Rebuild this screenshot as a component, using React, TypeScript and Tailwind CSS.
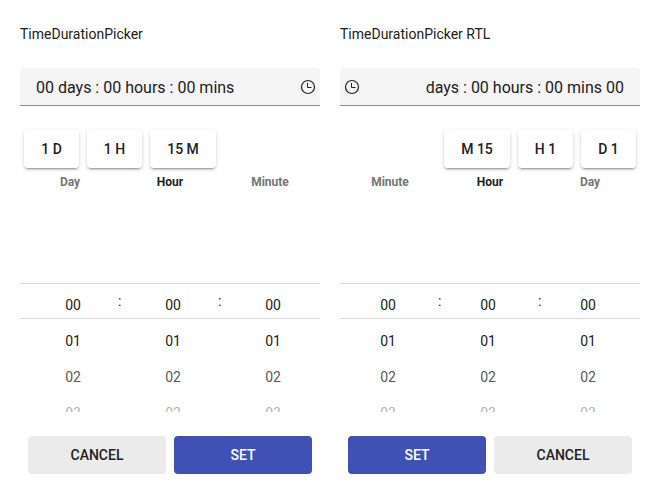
import React from 'react';

const FONT = "font-['Roboto','Liberation_Sans',sans-serif]";

function Clock() {
  return (
    <svg width="16" height="16" viewBox="0 0 16 16" fill="none" stroke="#212121" className="shrink-0">
      <circle cx="8" cy="8" r="6.5" strokeWidth="1.2" />
      <path d="M7.5 4V8.5H11.5" strokeWidth="1" />
    </svg>
  );
}

function Preset({ label, width }: { label: string; width: string }) {
  return (
    <button className={`h-[38px] rounded-[4px] bg-white text-sm font-medium shadow-[0_3px_1px_-2px_rgba(0,0,0,0.2),0_2px_2px_0_rgba(0,0,0,0.14),0_1px_5px_0_rgba(0,0,0,0.12)] ${width}`}>
      {label}
    </button>
  );
}

function Column({ rtl }: { rtl: boolean }) {
  return (
    <div className={`flex flex-1 flex-col text-center text-sm leading-9 ${rtl ? 'pr-1' : 'pl-1.5'}`}>
      <span>00</span>
      <span>01</span>
      <span className="opacity-75">02</span>
      <span className="opacity-35">03</span>
    </div>
  );
}

function Picker({ rtl = false }: { rtl?: boolean }) {
  return (
    <section dir={rtl ? 'rtl' : 'ltr'} className="w-[300px]">
      <h2 dir="ltr" className="h-12 pt-[4px] text-sm leading-5">{rtl ? 'TimeDurationPicker RTL' : 'TimeDurationPicker'}</h2>
      <div className="flex h-[38px] items-center justify-between rounded-t border-b border-[#8c8c8c] bg-[#f5f5f5] ps-4 pe-1 text-base">
        <span className="pt-0.5">00 days : 00 hours : 00 mins</span>
        <Clock />
      </div>
      <div className="mt-6 flex gap-2 px-1">
        <Preset label="1 D" width="w-[55px]" />
        <Preset label="1 H" width="w-[55px]" />
        <Preset label="15 M" width="w-[66px]" />
      </div>
      <div className="mt-1.5 grid grid-cols-3 text-center text-xs leading-4 font-bold text-[#757575]">
        <span>Day</span>
        <span className="text-[#212121]">Hour</span>
        <span>Minute</span>
      </div>
      <div className="relative mt-[93px] h-[129px] overflow-hidden">
        <div className="h-9 border-y border-[#dcdcdc]" />
        <div className="absolute inset-x-0 top-1 flex">
          <Column rtl={rtl} /><Column rtl={rtl} /><Column rtl={rtl} />
        </div>
        <span className="absolute top-2 left-[98px] text-sm leading-5">:</span>
        <span className="absolute top-2 left-[198px] text-sm leading-5">:</span>
      </div>
      <div className="mt-6 flex gap-2 px-2 text-sm font-medium">
        <button className="h-[38px] flex-1 rounded-[4px] bg-[#ebebeb]">CANCEL</button>
        <button className="h-[38px] flex-1 rounded-[4px] bg-[#3f51b5] text-white">SET</button>
      </div>
    </section>
  );
}

export default function App() {
  return (
    <main className={`flex h-[502px] w-[660px] gap-5 bg-white px-5 pt-5 text-[#212121] antialiased ${FONT}`}>
      <Picker />
      <Picker rtl />
    </main>
  );
}
